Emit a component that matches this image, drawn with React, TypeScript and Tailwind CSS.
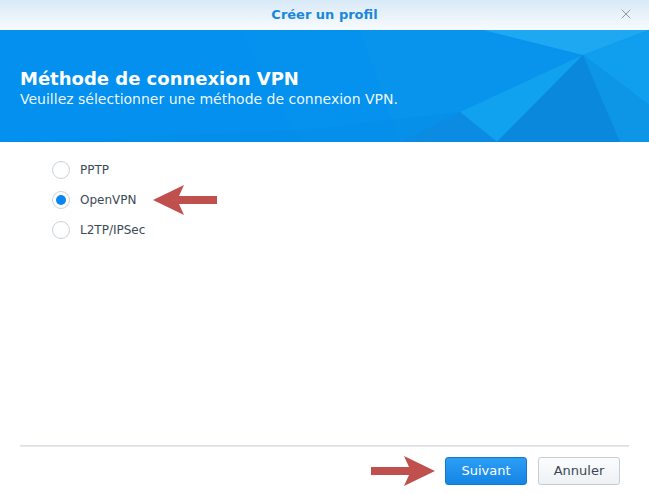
import { X } from "lucide-react";

function Radio({ checked }: { checked?: boolean }) {
  return (
    <span className="flex h-[18px] w-[18px] items-center justify-center rounded-full border border-[#c9d2da] bg-white">
      {checked && <span className="h-[10px] w-[10px] rounded-full bg-[#0a86ee]" />}
    </span>
  );
}

function Arrow({ dir }: { dir: "left" | "right" }) {
  return (
    <svg width="64" height="30" viewBox="0 0 64 30" className={dir === "right" ? "-scale-x-100" : ""}>
      <polygon points="0,15 31,0 26,11 64,11 64,19 26,19 31,30" fill="#c0504d" />
    </svg>
  );
}

export default function App() {
  const options = [
    { label: "PPTP" },
    { label: "OpenVPN", checked: true },
    { label: "L2TP/IPSec" },
  ];

  return (
    <div
      className="flex h-[494px] w-[649px] flex-col overflow-hidden bg-white"
      style={{ fontFamily: '"DejaVu Sans", Verdana, sans-serif' }}
    >
      {/* Title bar */}
      <div className="relative flex h-[30px] items-center justify-center bg-gradient-to-b from-[#d8e9f7] to-[#f8fbfe]">
        <span className="text-[13px] font-bold text-[#1a87dc]">Créer un profil</span>
        <X className="absolute right-[15px] top-[6px] h-[16px] w-[16px] text-[#8d98a3]" strokeWidth={1.5} />
      </div>

      {/* Banner */}
      <div className="relative h-[112px] overflow-hidden bg-[#0390ef]">
        <svg className="absolute inset-0" width="649" height="112" viewBox="0 0 649 112">
          <polygon points="240,0 360,0 420,112 300,112" fill="#0a95f0" opacity="0.4" />
          <polygon points="360,0 483,0 583,25 460,82 400,112" fill="#0894ec" />
          <polygon points="483,0 649,0 583,25" fill="#1ea8f2" />
          <polygon points="583,25 649,0 649,75" fill="#109eee" />
          <polygon points="583,25 460,82 497,112" fill="#10a2ee" />
          <polygon points="583,25 497,112 649,112" fill="#0a88dc" />
          <polygon points="583,25 649,75 649,112 620,112" fill="#0d95e6" />
          <polygon points="460,82 497,112 400,112" fill="#0b8ce2" />
          <polygon points="0,112 400,112 460,82 300,100" fill="#058ee8" opacity="0.6" />
        </svg>
        <div className="relative flex h-full flex-col justify-center px-[20px] pt-[3px] text-white">
          <h1 className="text-[18px] font-bold leading-[23px]">Méthode de connexion VPN</h1>
          <p className="text-[14px] leading-[18px] text-white/95">
            Veuillez sélectionner une méthode de connexion VPN.
          </p>
        </div>
      </div>

      {/* Body */}
      <div className="flex flex-1 flex-col pl-[52px] pt-[13px]">
        {options.map((o) => (
          <div key={o.label} className="flex h-[30px] items-center">
            <Radio checked={o.checked} />
            <span className="ml-[10px] text-[12px] text-[#3c4a57]">{o.label}</span>
            {o.checked && (
              <span className="ml-[17px] flex">
                <Arrow dir="left" />
              </span>
            )}
          </div>
        ))}
      </div>

      {/* Footer */}
      <div className="mx-[20px] h-[2px] bg-gradient-to-b from-[#d5dadf] to-[#eef0f2]" />
      <div className="flex items-center justify-end gap-[11px] px-[29px] pb-[8px] pt-[9px]">
        <span className="mr-[-1px] flex">
          <Arrow dir="right" />
        </span>
        <button className="h-[28px] w-[82px] rounded-[3px] border border-[#1479cc] bg-gradient-to-b from-[#2b9ef4] to-[#1485e6] text-[13px] text-white">
          Suivant
        </button>
        <button className="h-[28px] w-[82px] rounded-[3px] border border-[#c3ced8] bg-gradient-to-b from-[#fbfcfd] to-[#eef2f5] text-[13px] text-[#3a4754]">
          Annuler
        </button>
      </div>
    </div>
  );
}
